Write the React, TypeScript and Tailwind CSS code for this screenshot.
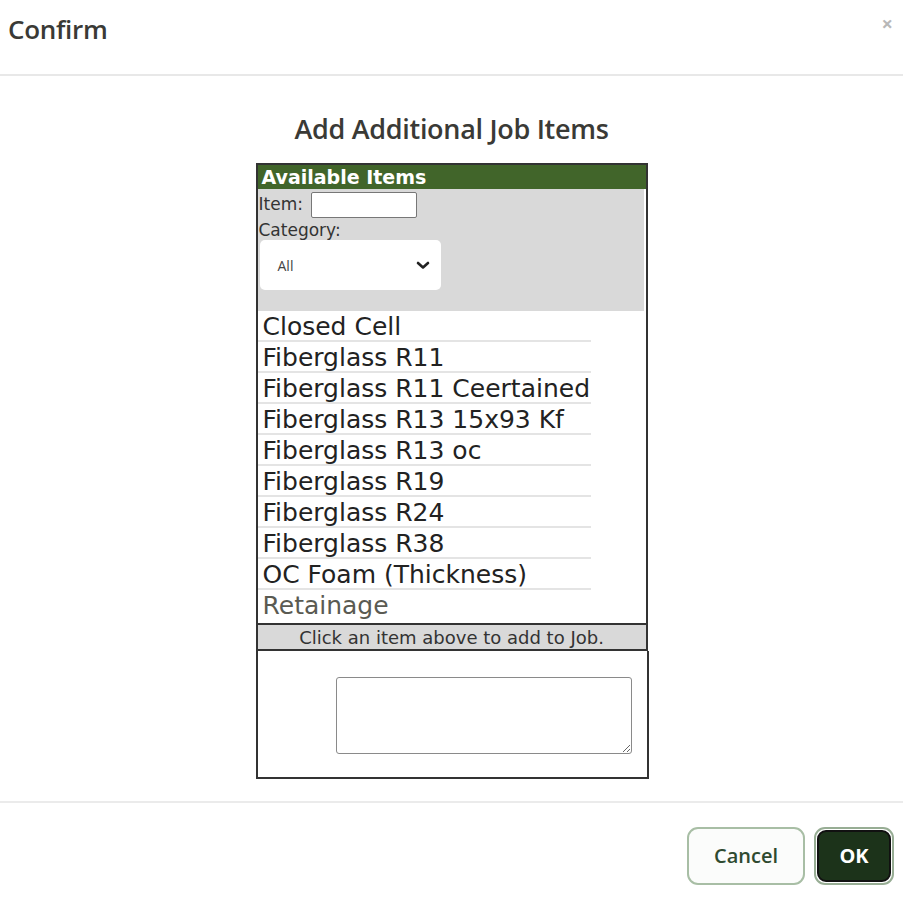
import React from "react";

const items = [
  "Closed Cell",
  "Fiberglass R11",
  "Fiberglass R11 Ceertained",
  "Fiberglass R13 15x93 Kf",
  "Fiberglass R13 oc",
  "Fiberglass R19",
  "Fiberglass R24",
  "Fiberglass R38",
  "OC Foam (Thickness)",
  "Retainage",
];

export default function App() {
  const sans = { fontFamily: '"Open Sans", "Noto Sans", sans-serif' };
  const verd = { fontFamily: '"DejaVu Sans", Verdana, sans-serif' };
  return (
    <div className="w-[903px] h-[898px] bg-white flex flex-col" style={sans}>
      {/* Header */}
      <div className="h-[76px] border-b-2 border-[#e8e8e8] flex items-start justify-between pl-2 pr-[10px] shrink-0">
        <div className="mt-[10px] text-[26px] font-semibold text-[#3a3a36] tracking-[-0.3px]">Confirm</div>
        <div className="mt-[14px] text-[20px] text-[#b8b8b8] font-bold leading-none">×</div>
      </div>

      {/* Body */}
      <div className="flex-1 flex flex-col items-center">
        <div className="mt-[36px] text-[27px] font-semibold text-[#3a3a36] tracking-[-0.3px] leading-[34px]">
          Add Additional Job Items
        </div>

        <div className="mt-[17px] w-[392px] border-2 border-[#333] bg-white">
          <div
            className="h-[24px] bg-[#41652a] text-white font-bold text-[19px] leading-[24px] pl-[4px]"
            style={verd}
          >
            Available Items
          </div>
          <div className="bg-[#d9d9d9] mr-[2px] h-[122px] pt-[3px] pl-[1px]" style={verd}>
            <div className="flex items-center gap-[8px] h-[26px]">
              <span className="text-[17px] text-[#333]">Item:</span>
              <input className="w-[106px] h-[26px] bg-white border border-[#777] rounded-[2px] outline-none" />
            </div>
            <div className="text-[17px] text-[#333] leading-[20px] mt-[2px]">Category:</div>
            <div className="mt-[0px] ml-[1px] w-[181px] h-[50px] bg-white rounded-[5px] flex items-center justify-between pl-[18px] pr-[10px]">
              <span className="text-[14px] text-[#444]" style={sans}>All</span>
              <svg width="16" height="16" viewBox="0 0 16 16" fill="none">
                <path d="M3 6l5 4.5L13 6" stroke="#222" strokeWidth="2.6" strokeLinecap="round" strokeLinejoin="round" />
              </svg>
            </div>
          </div>
          <div style={verd}>
            {items.map((it, i) => (
              <div
                key={it}
                className={
                  "w-[333px] h-[31px] leading-[31px] pl-[5px] text-[25px] whitespace-nowrap " +
                  (i < items.length - 1 ? "border-b-2 border-[#e4e4e4] " : "") +
                  (it === "Retainage" ? "text-[#5a5a52]" : "text-[#222]")
                }
              >
                {it}
              </div>
            ))}
          </div>
          <div
            className="mt-[2px] border-t-2 border-[#333] bg-[#d9d9d9] h-[26px] text-center text-[18px] leading-[26px] text-[#333]"
            style={verd}
          >
            Click an item above to add to Job.
          </div>
        </div>
        <div className="w-[393px] ml-[1px] h-[128px] border-2 border-t-0 border-[#333] flex items-start pl-[78px] pt-[26px] pr-[15px]">
          <textarea className="w-full h-[77px] border border-[#8a8a8a] rounded-[3px] resize-y outline-none bg-white" />
        </div>
      </div>

      {/* Footer */}
      <div className="h-[97px] border-t-2 border-[#ebebeb] flex items-start justify-end gap-[9px] pr-[9px] pt-[24px] shrink-0">
        <button className="w-[118px] h-[58px] rounded-[11px] border-2 border-[#a8bea5] bg-[#fbfcfb] text-[#2f4a30] text-[20px] font-semibold">
          Cancel
        </button>
        <button className="w-[80px] h-[58px] rounded-[11px] border-2 border-[#97ad94] p-[1px] bg-white">
          <span className="flex w-full h-full items-center justify-center rounded-[9px] border-2 border-[#111] bg-[#1c331a] text-white text-[20px] font-bold">
            OK
          </span>
        </button>
      </div>
    </div>
  );
}
